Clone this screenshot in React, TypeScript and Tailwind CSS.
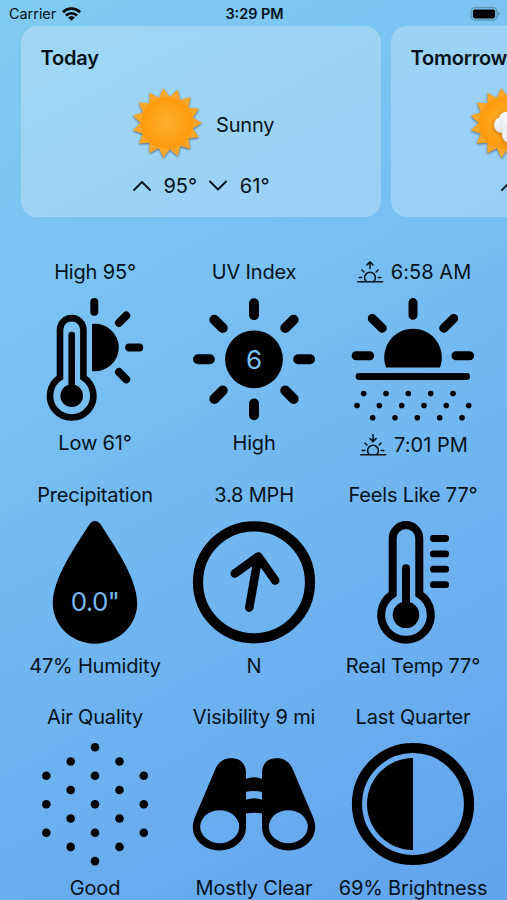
import type { ReactNode } from 'react';
import clsx from 'clsx';

const SUN_POINTS = Array.from({ length: 30 }, (_, i) => {
  const angle = (i * 12 * Math.PI) / 180;
  const r = i % 2 === 0 ? 35 : 26.5;
  return `${(36 + r * Math.cos(angle)).toFixed(2)},${(36 + r * Math.sin(angle)).toFixed(2)}`;
}).join(' ');

const SunBadge = ({ cloudy }: { cloudy?: boolean }) => (
  <svg width={72} height={72} viewBox="0 0 72 72" className="shrink-0 overflow-visible">
    <defs>
      <radialGradient id="sun-face">
        <stop offset="0" stopColor="#ffb02e" />
        <stop offset="1" stopColor="#ff9a0c" />
      </radialGradient>
      <linearGradient id="cloud-face" x1="0" y1="0" x2="0" y2="1">
        <stop offset="0" stopColor="#ffffff" />
        <stop offset="1" stopColor="#dfe3ea" />
      </linearGradient>
    </defs>
    <polygon points={SUN_POINTS} fill="#f9a62b" className="drop-shadow-[0_1px_1px_rgba(40,60,80,0.7)]" />
    <circle cx="36" cy="36" r="26" fill="url(#sun-face)" />
    {cloudy && (
      <g fill="url(#cloud-face)" className="drop-shadow-[0_1px_2px_rgba(90,50,0,0.5)]">
        <circle cx="33" cy="38" r="8" />
        <circle cx="37" cy="32" r="7" />
        <circle cx="41" cy="48" r="8" />
        <circle cx="48" cy="38" r="14" />
      </g>
    )}
  </svg>
);

const Chevron = ({ down }: { down?: boolean }) => (
  <svg width={18} height={12} viewBox="0 0 18 12" className="shrink-0" fill="none" stroke="#04121c" strokeWidth={1.8} strokeLinecap="round" strokeLinejoin="round">
    <path d={down ? 'M1 1.5l8 8 8-8' : 'M1 10l8-8 8 8'} />
  </svg>
);

const Horizon = ({ down }: { down?: boolean }) => (
  <svg width={26} height={22} viewBox="0 0 26 22" className="shrink-0 overflow-visible" fill="none" stroke="#04121c" strokeWidth={1.5} strokeLinecap="round" strokeLinejoin="round">
    <path d="M.7 20.8H25.5M9.2 20.5a5.4 5.4 0 1 1 7.6 0M2.2 16.4h2.6M21.2 16.4h2.6M4.9 9l2 2M21.1 9l-2 2" />
    <path d={down ? 'M13 .6V7.4M10 4.6l3 3 3-3' : 'M13 7.6V1M10 3.9l3-3 3 3'} />
  </svg>
);

interface GlyphProps {
  children: ReactNode;
  width?: number;
}

const Glyph = ({ children, width = 8 }: GlyphProps) => (
  <svg width={122} height={122} viewBox="0 -0.3 122 122" className="shrink-0 overflow-visible" fill="none" stroke="#000" strokeWidth={width} strokeLinecap="round">
    {children}
  </svg>
);

const HighLowGlyph = () => (
  <Glyph>
    <path d="M26 79.2V31.5a11.7 11.7 0 0 1 23.4 0V79.2A21.7 21.7 0 1 1 26 79.2Z" strokeWidth={6.6} />
    <path d="M37.7 36.8V90" strokeWidth={6.6} />
    <circle cx="37.7" cy="97.5" r="11.3" fill="#000" stroke="none" />
    <path d="M58 25.7A23.7 23.7 0 1 1 58 72.7Z" fill="#000" stroke="none" />
    <path d="M60.3 3.8V13.5M84.9 24.6l7.3-7.3M95.2 49.2h10M85 73.8l7.2 7.2" />
  </Glyph>
);

const UvGlyph = () => (
  <Glyph width={10}>
    <circle cx="61" cy="61" r="28.9" fill="#000" stroke="none" />
    {[0, 45, 90, 135, 180, 225, 270, 315].map((deg) => (
      <path key={deg} d="M61 5V16.8" transform={`rotate(${deg} 61 61)`} />
    ))}
    <text x="61" y="70.6" textAnchor="middle" fontSize="26" fill="#7cc0f3" stroke="none">
      6
    </text>
  </Glyph>
);

const DOT_ROWS = [
  { y: 95.2, xs: [11.7, 34, 56.3, 78.7, 101] },
  { y: 107.2, xs: [5, 27.3, 49.7, 72, 94.3, 116.7] },
  { y: 119.5, xs: [20.7, 43, 65.3, 87.7, 110] },
];

const SunriseGlyph = () => (
  <Glyph width={9}>
    <path d="M61 4.3V17M20.3 20.2L30.3 29.9M101.7 20.2L91.7 29.9M4.1 57.5H17.7M104 57.5H117.6" />
    <path d="M34 69.2A28.8 28.8 0 1 1 88 69.2Z" fill="#000" stroke="none" />
    <path d="M7 78.2H114.7" strokeWidth={6.8} />
    {DOT_ROWS.map(({ y, xs }) =>
      xs.map((x) => <circle key={`${x}-${y}`} cx={x} cy={y} r="2.8" fill="#000" stroke="none" />)
    )}
  </Glyph>
);

const DropGlyph = () => (
  <Glyph>
    <path
      d="M61-.4C63-.4 65 .7 66.5 3 80 24 103.2 57 103.2 82 103.2 104.5 84 122.4 61 122.4S18.8 104.5 18.8 82C18.8 57 42 24 55.5 3 57 .7 59-.4 61-.4Z"
      fill="#000"
      stroke="none"
    />
    <text x="61" y="89.3" textAnchor="middle" fontSize="26" letterSpacing="-0.6" fill="#75b9f1" stroke="none">
      0.0"
    </text>
  </Glyph>
);

const WindGlyph = () => (
  <Glyph width={8.6}>
    <circle cx="61" cy="61" r="56" strokeWidth={10.2} />
    <path d="M56.3 86.3L65.3 35.2M41.8 52.2L65.3 35.2 82.2 59.2" strokeLinejoin="round" />
  </Glyph>
);

const FeelsGlyph = () => (
  <Glyph>
    <path d="M40.7 72.8V17.1a13.3 13.3 0 0 1 26.6 0V72.8A24.8 24.8 0 1 1 40.7 72.8Z" />
    <path d="M54 47V90" />
    <circle cx="54" cy="93.5" r="13.3" fill="#000" stroke="none" />
    <path d="M81.4 17.2H93.7M81.4 32.6H93.7M81.4 47.9H93.7M81.4 63.4H93.7" strokeWidth={6.8} />
  </Glyph>
);

const AIR_COLUMNS = [
  { x: 12.3, ys: [32.4, 61, 89.4] },
  { x: 36.7, ys: [18.2, 46.7, 75.2, 103.6] },
  { x: 61, ys: [4, 32.4, 61, 89.4, 117.8] },
  { x: 85.5, ys: [18.2, 46.7, 75.2, 103.6] },
  { x: 109.8, ys: [32.4, 61, 89.4] },
];

const AirGlyph = () => (
  <Glyph>
    {AIR_COLUMNS.map(({ x, ys }) =>
      ys.map((y) => <circle key={`${x}-${y}`} cx={x} cy={y} r="4.3" fill="#000" stroke="none" />)
    )}
  </Glyph>
);

const BARREL =
  'M53 30V84A26.6 23.3 0 0 1-.2 84C-.2 79.5 1 76 2.5 72.5L22.3 26C25.8 18 31 14.9 38.5 14.9 47.5 14.9 53 20.5 53 30ZM46.2 83.4A19.5 16.5 0 1 0 7.2 83.4 19.5 16.5 0 1 0 46.2 83.4Z';

const BinocularsGlyph = () => (
  <Glyph>
    <g fill="#000" fillRule="evenodd" stroke="none">
      <path d={BARREL} />
      <path d={BARREL} transform="translate(122 0) scale(-1 1)" />
      <path d="M52.5 35.6Q61 32.2 69.5 35.6V48.8Q61 46.6 52.5 48.8ZM52.5 56.4Q61 53.4 69.5 56.4V70.2Q61 68.6 52.5 70.2Z" />
    </g>
  </Glyph>
);

const MoonGlyph = () => (
  <Glyph>
    <circle cx="61" cy="60.7" r="56" strokeWidth={10.2} />
    <path d="M61 14.7A46 46 0 0 0 61 106.7Z" fill="#000" stroke="none" />
  </Glyph>
);

interface TileProps {
  title: ReactNode;
  label: ReactNode;
  glyph: ReactNode;
}

const Tile = ({ title, label, glyph }: TileProps) => (
  <div className="flex flex-col items-center">
    <div className="mb-3 flex h-[29px] items-center gap-2 pl-px whitespace-nowrap">{title}</div>
    {glyph}
    <div className="mt-[9px] flex h-7 items-center gap-2 pl-px whitespace-nowrap">{label}</div>
  </div>
);

interface DayCardProps {
  title: string;
  summary?: string;
  high?: string;
  low?: string;
  cloudy?: boolean;
}

const DayCard = ({ title, summary, high, low, cloudy }: DayCardProps) => (
  <div className="flex h-[191px] w-[360px] shrink-0 flex-col rounded-2xl bg-white/25 pt-[18px]">
    <h2 className="pl-[19.5px] text-[20px] leading-7 font-semibold tracking-[-0.2px]">{title}</h2>
    <div className={clsx('mt-[15px] flex items-center gap-[13px]', cloudy ? 'pl-[78px]' : 'pl-[110px]')}>
      <SunBadge cloudy={cloudy} />
      <span className="pt-[3px]">{summary}</span>
    </div>
    <div className={clsx('mt-[13px] flex h-7 items-center gap-[12.4px] tracking-normal', cloudy ? 'pl-[110px]' : 'pl-[112px]')}>
      <Chevron />
      <span>{high}</span>
      <Chevron down />
      <span>{low}</span>
    </div>
  </div>
);

const StatusBar = () => (
  <div className="grid h-[26px] grid-cols-3 items-center pr-[7px] pl-[9px] text-[14.4px] tracking-normal">
    <div className="flex items-center gap-1.5">
      <span>Carrier</span>
      <svg width={19} height={14} viewBox="0 0 19 14" fill="none" stroke="#000" strokeWidth={2.7}>
        <path d="M1 5.2a12 12 0 0 1 17 0M4 8.5a7.8 7.8 0 0 1 11 0" />
        <path d="M9.5 13.8L6.2 10.5a4.7 4.7 0 0 1 6.6 0Z" fill="#000" stroke="none" />
      </svg>
    </div>
    <span className="text-center font-semibold">3:29 PM</span>
    <svg width={30} height={14} viewBox="0 0 30 14" className="justify-self-end">
      <rect x="1.1" y=".6" width="25.8" height="12.6" rx="3.6" fill="none" stroke="#5b93b3" strokeWidth={1.2} />
      <rect x="2.9" y="2.4" width="22.2" height="9" rx="1.8" />
      <path d="M28 4.8c2 .8 2 3.4 0 4.2Z" fill="#5b93b3" />
    </svg>
  </div>
);

const TILES: TileProps[] = [
  { title: 'High 95°', label: 'Low 61°', glyph: <HighLowGlyph /> },
  { title: 'UV Index', label: 'High', glyph: <UvGlyph /> },
  {
    title: (
      <div className="flex items-center gap-2 pl-0.5">
        <Horizon />
        <span className="tracking-[0.05px]">6:58 AM</span>
      </div>
    ),
    label: (
      <div className="flex items-center gap-2 pt-[3px] pl-0.5">
        <Horizon down />
        <span className="tracking-[0.05px]">7:01 PM</span>
      </div>
    ),
    glyph: <SunriseGlyph />,
  },
  { title: 'Precipitation', label: '47% Humidity', glyph: <DropGlyph /> },
  { title: '3.8 MPH', label: 'N', glyph: <WindGlyph /> },
  { title: 'Feels Like 77°', label: 'Real Temp 77°', glyph: <FeelsGlyph /> },
  { title: 'Air Quality', label: 'Good', glyph: <AirGlyph /> },
  { title: 'Visibility 9 mi', label: 'Mostly Clear', glyph: <BinocularsGlyph /> },
  { title: 'Last Quarter', label: '69% Brightness', glyph: <MoonGlyph /> },
];

export default function App() {
  return (
    <div className="h-[900px] w-[507px] overflow-hidden bg-linear-[152deg,#80cbf1_0%,#78c0f2_35%,#6db2f0_68%,#61a3ed_100%] font-['Inter',sans-serif] text-[20px] leading-7 tracking-[-0.18px] text-[#04121c]">
      <StatusBar />
      <div className="flex gap-[10px] pl-[21px]">
        <DayCard title="Today" summary="Sunny" high="95°" low="61°" />
        <DayCard title="Tomorrow" cloudy />
      </div>
      <div className="mx-auto mt-10 grid w-[477px] grid-cols-3 grid-rows-[201px_200px_200px] gap-y-[22px]">
        {TILES.map((tile, i) => (
          <Tile key={i} {...tile} />
        ))}
      </div>
    </div>
  );
}
